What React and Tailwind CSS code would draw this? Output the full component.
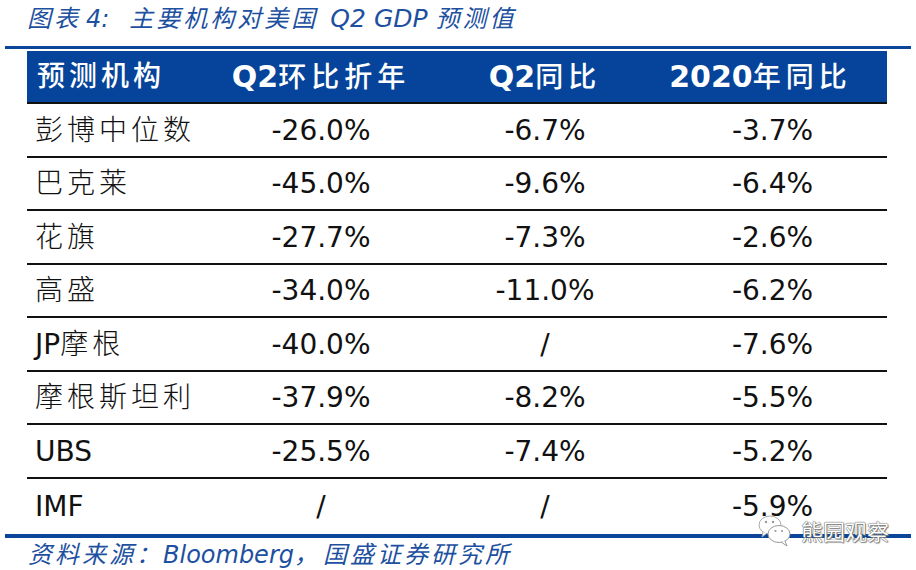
const rows = [
  [['彭博中位数'], '-26.0%', '-6.7%', '-3.7%'],
  [['巴克莱'], '-45.0%', '-9.6%', '-6.4%'],
  [['花旗'], '-27.7%', '-7.3%', '-2.6%'],
  [['高盛'], '-34.0%', '-11.0%', '-6.2%'],
  [['摩根', 'JP'], '-40.0%', '/', '-7.6%'],
  [['摩根斯坦利'], '-37.9%', '-8.2%', '-5.5%'],
  [['', 'UBS'], '-25.5%', '-7.4%', '-5.2%'],
  [['', 'IMF'], '/', '/', '-5.9%'],
];

const font = { fontFamily: '"DejaVu Sans", "Noto Sans CJK SC", sans-serif' };

function WeChatMark() {
  return (
    <div className="absolute left-[757px] top-[513px] flex items-center gap-[8px]">
      <svg width="36" height="34" viewBox="0 0 36 34">
        <ellipse cx="13" cy="12" rx="11" ry="9" fill="#fff" stroke="#aaa" strokeWidth="1" />
        <path d="M6 19 L5 24 L10 20" fill="#fff" stroke="#aaa" strokeWidth="1" />
        <ellipse cx="22" cy="21" rx="11" ry="8.5" fill="#fff" stroke="#999" strokeWidth="1" />
        <path d="M28 28 L30 33 L24 29" fill="#fff" stroke="#999" strokeWidth="1" />
        <circle cx="9" cy="9" r="1.2" fill="#999" />
        <circle cx="16" cy="9" r="1.2" fill="#999" />
        <circle cx="18.5" cy="18" r="1.1" fill="#999" />
        <circle cx="25" cy="18" r="1.1" fill="#999" />
      </svg>
      <span
        className="text-[22px] leading-none text-white [text-shadow:0_0_1px_#555,0_0_1px_#555,1px_1px_1px_#888]"
        style={{ fontFamily: '"Noto Sans CJK SC", sans-serif' }}
      >
        熊园观察
      </span>
    </div>
  );
}

function Head({ latin, cjk }) {
  return (
    <>
      <span className="text-[30px] font-bold">{latin}</span>
      <span className="tracking-[5px] font-medium">{cjk}</span>
    </>
  );
}

export default function App() {
  return (
    <div className="relative w-[916px] h-[570px] bg-white overflow-hidden" style={font}>
      <div className="h-[46px] pl-[27px] pt-[4px] text-[24px] leading-[30px] italic text-[#1d509f] whitespace-nowrap">
        <span className="tracking-[3px]">图表</span>
        <span className="ml-[5px]">4:</span>
        <span className="ml-[20px] tracking-[3px]">主要机构对美国</span>
        <span className="ml-[12px] text-[25px]">Q2 GDP</span>
        <span className="ml-[8px] tracking-[3px]">预测值</span>
      </div>
      <div className="mx-[5px] h-[3px] bg-[#0a4599]" />

      <div className="ml-[27px] mt-[2px] w-[860px]">
        <div className="flex h-[53px] bg-[#05449a] border-b-2 border-[#111] text-white text-[28px] items-center">
          <div className="w-[183px] pl-[10px] tracking-[4px] font-medium">预测机构</div>
          <div className="w-[222px] text-center">
            <Head latin="Q2" cjk="环比折年" />
          </div>
          <div className="w-[226px] text-center">
            <Head latin="Q2" cjk="同比" />
          </div>
          <div className="w-[229px] text-center pr-[24px]">
            <Head latin="2020" cjk="年同比" />
          </div>
        </div>

        {rows.map((r, i) => (
          <div
            key={i}
            className={
              i < rows.length - 1
                ? 'flex h-[53.5px] pt-[2px] items-center border-b-2 border-[#111] text-[28px] text-[#111]'
                : 'flex h-[55px] pt-[2px] items-center text-[28px] text-[#111]'
            }
          >
            <div className="w-[183px] pl-[8px] whitespace-nowrap">
              {r[0][1] && <span>{r[0][1]}</span>}
              <span className="tracking-[4px] font-light">{r[0][0]}</span>
            </div>
            <div className="w-[222px] text-center">{r[1]}</div>
            <div className="w-[226px] text-center">{r[2]}</div>
            <div className="w-[229px] text-center">{r[3]}</div>
          </div>
        ))}
      </div>

      <div className="mx-[5px] h-[4px] bg-[#0a4599]" />
      <div className="pl-[28px] pt-[2px] text-[24px] leading-[30px] italic text-[#1d509f] whitespace-nowrap">
        <span className="tracking-[3px]">资料来源：</span>
        <span>Bloomberg</span>
        <span className="tracking-[3px]">，</span>
        <span className="ml-[2px] tracking-[3px]">国盛证券研究所</span>
      </div>

      <WeChatMark />
    </div>
  );
}
